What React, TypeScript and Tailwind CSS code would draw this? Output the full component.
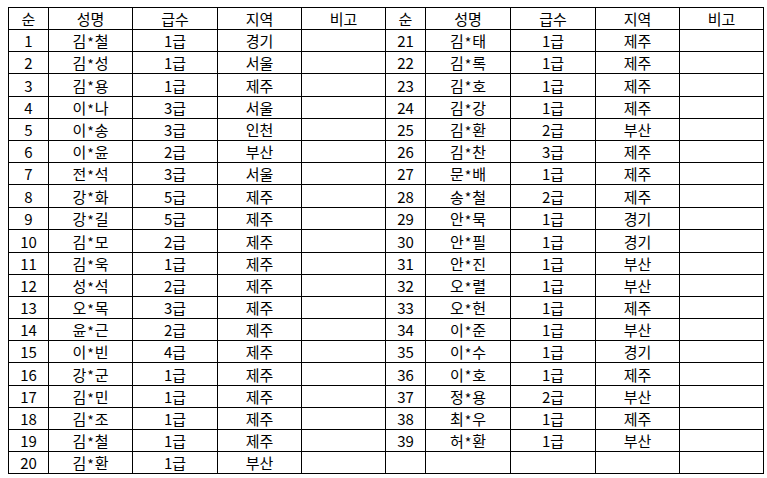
const left: string[][] = [
  ["1", "김*철", "1급", "경기"],
  ["2", "김*성", "1급", "서울"],
  ["3", "김*용", "1급", "제주"],
  ["4", "이*나", "3급", "서울"],
  ["5", "이*송", "3급", "인천"],
  ["6", "이*윤", "2급", "부산"],
  ["7", "전*석", "3급", "서울"],
  ["8", "강*화", "5급", "제주"],
  ["9", "강*길", "5급", "제주"],
  ["10", "김*모", "2급", "제주"],
  ["11", "김*욱", "1급", "제주"],
  ["12", "성*석", "2급", "제주"],
  ["13", "오*목", "3급", "제주"],
  ["14", "윤*근", "2급", "제주"],
  ["15", "이*빈", "4급", "제주"],
  ["16", "강*군", "1급", "제주"],
  ["17", "김*민", "1급", "제주"],
  ["18", "김*조", "1급", "제주"],
  ["19", "김*철", "1급", "제주"],
  ["20", "김*환", "1급", "부산"],
];

const right: string[][] = [
  ["21", "김*태", "1급", "제주"],
  ["22", "김*록", "1급", "제주"],
  ["23", "김*호", "1급", "제주"],
  ["24", "김*강", "1급", "제주"],
  ["25", "김*환", "2급", "부산"],
  ["26", "김*찬", "3급", "제주"],
  ["27", "문*배", "1급", "제주"],
  ["28", "송*철", "2급", "제주"],
  ["29", "안*묵", "1급", "경기"],
  ["30", "안*필", "1급", "경기"],
  ["31", "안*진", "1급", "부산"],
  ["32", "오*렬", "1급", "부산"],
  ["33", "오*헌", "1급", "제주"],
  ["34", "이*준", "1급", "부산"],
  ["35", "이*수", "1급", "경기"],
  ["36", "이*호", "1급", "제주"],
  ["37", "정*용", "2급", "부산"],
  ["38", "최*우", "1급", "제주"],
  ["39", "허*환", "1급", "부산"],
  ["", "", "", ""],
];

const header = ["순", "성명", "급수", "지역", "비고"];

// rows that are one pixel taller so the lines land where the sheet has them
const tall = [3, 8, 10, 16];

const Cell = ({ text }: { text: string }) => {
  const parts = text.split("*");
  return (
    <div className="flex items-center justify-center border-r border-black leading-none">
      {parts.length === 2 ? (
        <>
          {parts[0]}
          <span className="inline-block px-[1px] text-[14px] translate-y-[1px]">*</span>
          {parts[1]}
        </>
      ) : (
        text
      )}
    </div>
  );
};

const Row = ({ cells, i }: { cells: string[]; i: number }) => (
  <div
    className={
      "grid grid-cols-[40px_84px_85px_84px_84px_40px_85px_85px_84px_84px] border-b border-black " +
      (tall.includes(i) ? "h-[23px]" : "h-[22px]")
    }
  >
    {cells.map((c, k) => (
      <Cell key={k} text={c} />
    ))}
  </div>
);

export default function App() {
  const rows = [
    [...header, ...header],
    ...left.map((l, i) => [...l, "", ...right[i], ""]),
  ];

  return (
    <div className="w-[767px] h-[478px] bg-white pl-[8px] pt-[7px] text-black text-[15px] font-['Noto_Sans_CJK_KR','Noto_Sans',sans-serif]">
      <div className="w-[756px] border-l border-t border-black">
        {rows.map((r, i) => (
          <Row key={i} cells={r} i={i} />
        ))}
      </div>
    </div>
  );
}
